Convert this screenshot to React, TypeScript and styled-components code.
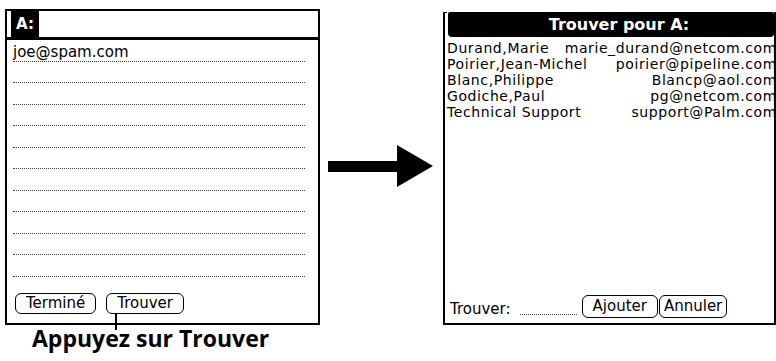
import React from "react";
import styled, { createGlobalStyle } from "styled-components";

const GlobalStyle = createGlobalStyle`
  html, body {
    margin: 0;
    padding: 0;
    background: #fff;
  }
  body {
    width: 776px;
    height: 361px;
    overflow: hidden;
    font-family: "DejaVu Sans", "Liberation Sans", sans-serif;
    color: #000;
  }
`;

const Page = styled.div`
  width: 776px;
  height: 361px;
  box-sizing: border-box;
  padding: 9px 0 0 5px;
  display: flex;
  align-items: flex-start;
`;

const LeftColumn = styled.div`
  flex: none;
  width: 315px;
  display: flex;
  flex-direction: column;
`;

const Screen = styled.div`
  height: 316px;
  box-sizing: border-box;
  border: 2px solid #000;
  display: flex;
  flex-direction: column;
`;

const Header = styled.div`
  height: 29px;
  box-sizing: border-box;
  border-bottom: 3px solid #000;
  padding-left: 4px;
  display: flex;
`;

const Tab = styled.div`
  width: 28px;
  background: #000;
  color: #fff;
  font-weight: bold;
  font-size: 15px;
  padding-left: 5px;
  box-sizing: border-box;
  display: flex;
  align-items: center;
`;

const Lines = styled.div`
  display: flex;
  flex-direction: column;
  padding: 0 13px 0 6px;
`;

const Line = styled.div`
  height: 21.5px;
  box-sizing: border-box;
  border-bottom: 1px dotted #444;
  display: flex;
  align-items: flex-end;
  font-size: 15px;
  line-height: 18px;
`;

const ButtonRow = styled.div<{ $gap: number }>`
  margin-top: auto;
  display: flex;
  gap: ${(p) => p.$gap}px;
`;

const Button = styled.div<{ $height: number; $pad: number }>`
  position: relative;
  height: ${(p) => p.$height}px;
  line-height: ${(p) => p.$height - 2}px;
  box-sizing: border-box;
  border: 1px solid #000;
  border-radius: 6px;
  padding: 0 ${(p) => p.$pad}px;
  font-size: 15px;
  white-space: nowrap;
`;

const Pointer = styled.span`
  position: absolute;
  left: 8px;
  top: 100%;
  width: 2px;
  height: 17px;
  background: #000;
`;

const LeftButtons = styled(ButtonRow)`
  padding: 0 0 9px 8px;
`;

const Caption = styled.div`
  margin: 0 0 0 27px;
  font-family: "Open Sans", "Liberation Sans", sans-serif;
  font-weight: 700;
  font-size: 23px;
  line-height: 26px;
  white-space: nowrap;
`;

const ArrowIcon = styled.svg`
  flex: none;
  margin: 136px 0 0 8px;
`;

const Dialog = styled.div`
  position: relative;
  flex: none;
  margin: 3px 0 0 10px;
  width: 333px;
  height: 313px;
  box-sizing: border-box;
  border: 2px solid #000;
  border-top: none;
  display: flex;
  flex-direction: column;
  overflow: hidden;

  &::before {
    content: "";
    position: absolute;
    left: 0;
    top: 0;
    width: 2px;
    height: 1px;
    background: #000;
  }
`;

const TitleBar = styled.div`
  height: 25px;
  margin-left: 3px;
  border-radius: 2px 2px 4px 4px;
  background: #000;
  color: #fff;
  font-weight: bold;
  font-size: 16px;
  padding-left: 16px;
  display: flex;
  align-items: center;
  justify-content: center;
`;

const Entries = styled.div`
  padding: 3px 0 0 2px;
  margin-right: -3px;
`;

const Entry = styled.div`
  height: 16px;
  line-height: 16px;
  font-size: 14px;
  letter-spacing: 0.6px;
  white-space: nowrap;
  display: flex;
  justify-content: space-between;
  gap: 5px;
`;

const FindBar = styled.div`
  margin-top: auto;
  padding: 0 0 5px 5px;
  display: flex;
  align-items: flex-end;
`;

const FindLabel = styled.span`
  font-size: 15px;
  line-height: 18px;
`;

const FindField = styled.span`
  width: 57px;
  height: 15px;
  margin: 0 5px 3px 9px;
  border-bottom: 1px dotted #444;
`;

const entries = [
  { name: "Durand,Marie", mail: "marie_durand@netcom.com" },
  { name: "Poirier,Jean-Michel", mail: "poirier@pipeline.com" },
  { name: "Blanc,Philippe", mail: "Blancp@aol.com" },
  { name: "Godiche,Paul", mail: "pg@netcom.com" },
  { name: "Technical Support", mail: "support@Palm.com" },
];

const blankLines = Array.from({ length: 10 }, (_, i) => i);

const App = () => {
  return (
    <>
      <GlobalStyle />
      <Page>
        <LeftColumn>
          <Screen>
            <Header>
              <Tab>A:</Tab>
            </Header>
            <Lines>
              <Line>joe@spam.com</Line>
              {blankLines.map((i) => (
                <Line key={i} />
              ))}
            </Lines>
            <LeftButtons $gap={10}>
              <Button $height={21} $pad={10}>
                Terminé
              </Button>
              <Button $height={21} $pad={10}>
                Trouver
                <Pointer />
              </Button>
            </LeftButtons>
          </Screen>
          <Caption>Appuyez sur Trouver</Caption>
        </LeftColumn>

        <ArrowIcon width="105" height="42" viewBox="0 0 105 42">
          <path d="M0 16 H69 V0 L105 21 L69 42 V27 H0 Z" fill="#000" />
        </ArrowIcon>

        <Dialog>
          <TitleBar>Trouver pour A:</TitleBar>
          <Entries>
            {entries.map((e) => (
              <Entry key={e.name}>
                <span>{e.name}</span>
                <span>{e.mail}</span>
              </Entry>
            ))}
          </Entries>
          <FindBar>
            <FindLabel>Trouver:</FindLabel>
            <FindField />
            <ButtonRow $gap={1}>
              <Button $height={23} $pad={10}>
                Ajouter
              </Button>
              <Button $height={23} $pad={4}>
                Annuler
              </Button>
            </ButtonRow>
          </FindBar>
        </Dialog>
      </Page>
    </>
  );
};

export default App;
